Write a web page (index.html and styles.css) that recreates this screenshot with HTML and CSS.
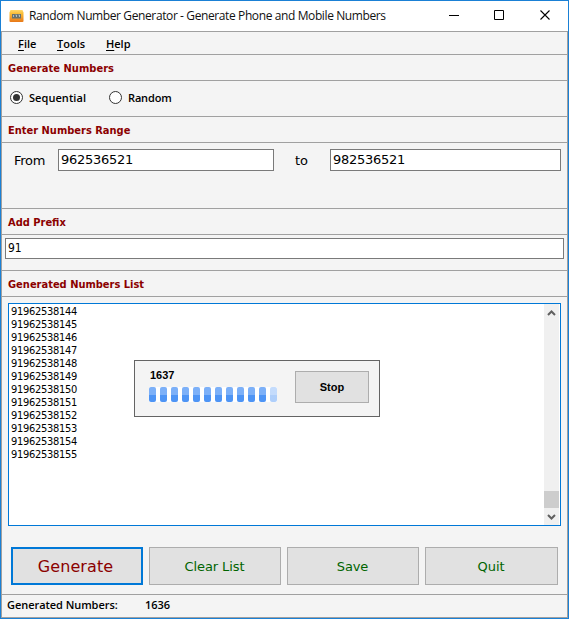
FILE: index.html
```html
<!DOCTYPE html>
<html lang="en">
<head>
<meta charset="utf-8">
<title>Random Number Generator</title>
<link rel="stylesheet" href="styles.css">
</head>
<body>
<div class="window">
  <header class="titlebar">
    <svg class="app-icon" width="15" height="14" viewBox="0 0 15 14">
      <defs><linearGradient id="gold" x1="0" y1="0" x2="0" y2="1"><stop offset="0" stop-color="#ffd86a"/><stop offset=".3" stop-color="#f8bd38"/><stop offset="1" stop-color="#e87818"/></linearGradient></defs>
      <path d="M1.500 1h12l1 2.500v8.500q0 1-1 1h-12q-1 0-1-1V3.500z" fill="url(#gold)"/>
      <rect x="3" y="5" width="9" height="4.500" fill="#66726f"/>
      <path d="M4.500 6v2M6.500 6h1v2M9.500 6h1v2" fill="none" stroke="#d5dcd5" stroke-width=".7"/>
    </svg>
    <span class="title">Random Number Generator - Generate Phone and Mobile Numbers</span>
    <svg class="controls" width="102" height="12" viewBox="0 0 102 12" fill="none" stroke="#000">
      <path d="M0 6.500h10M45.500 1.500h9v9h-9z"/><path d="M91.500 1.500l9 9M100.500 1.500l-9 9" stroke-width="1.100"/>
    </svg>
  </header>
  <nav class="menu"><span class="m-file"><u>F</u>ile</span><span class="m-tools"><u>T</u>ools</span><span class="m-help"><u>H</u>elp</span></nav>
  <h2 class="heading h-gen"><span>Generate Numbers</span></h2>
  <div class="modes">
    <svg width="13" height="13" viewBox="0 0 13 13"><circle cx="6.500" cy="6.500" r="6" fill="#fff" stroke="#333"/><circle cx="6.500" cy="6.500" r="3.500" fill="#333"/></svg>
    <span class="seq">Sequential</span>
    <svg width="13" height="13" viewBox="0 0 13 13"><circle cx="6.500" cy="6.500" r="6" fill="#fff" stroke="#333"/></svg>
    <span class="rand">Random</span>
  </div>
  <h2 class="heading h-range"><span>Enter Numbers Range</span></h2>
  <div class="range">
    <span class="from">From</span><div class="field f-from"><span>962536521</span></div>
    <span class="to">to</span><div class="field f-to"><span>982536521</span></div>
  </div>
  <h2 class="heading h-prefix"><span>Add Prefix</span></h2>
  <div class="prefix"><div class="field f-prefix"><span>91</span></div></div>
  <h2 class="heading h-list"><span>Generated Numbers List</span></h2>
  <main class="results">
    <div class="listbox">
      <div class="rows">
        <div>91962538144</div><div>91962538145</div><div>91962538146</div><div>91962538147</div>
        <div>91962538148</div><div>91962538149</div><div>91962538150</div><div>91962538151</div>
        <div>91962538152</div><div>91962538153</div><div>91962538154</div><div>91962538155</div>
      </div>
      <div class="scrollbar">
        <svg width="15" height="17" viewBox="0 0 15 17"><path d="M4 11l3.500-3.500L11 11" fill="none" stroke="#606060" stroke-width="2"/></svg>
        <div class="thumb"></div>
        <svg width="15" height="17" viewBox="0 0 15 17"><path d="M4 7l3.500 3.500L11 7" fill="none" stroke="#606060" stroke-width="2"/></svg>
      </div>
      <div class="dialog">
        <div class="progress">
          <span class="count">1637</span>
          <div class="bar"><i></i><i></i><i></i><i></i><i></i><i></i><i></i><i></i><i></i><i></i><i></i><i class="fading"></i></div>
        </div>
        <div class="stop"><span>Stop</span></div>
      </div>
    </div>
    <div class="buttons">
      <div class="btn primary"><span>Generate</span></div>
      <div class="btn clear"><span>Clear List</span></div>
      <div class="btn save"><span>Save</span></div>
      <div class="btn quit"><span>Quit</span></div>
    </div>
  </main>
  <footer class="status"><span class="label">Generated Numbers:</span><span class="value">1636</span></footer>
</div>
</body>
</html>
```
FILE: styles.css
```css
* { box-sizing: border-box; }
body { margin: 0; background: #fff; }
svg { display: block; flex: none; }
.window {
  width: 569px; height: 619px; border: 1px solid #1a80d5; background: #f4f4f4;
  display: flex; flex-direction: column; color: #000; white-space: nowrap;
  font: 11px/13px "DejaVu Sans Condensed", "DejaVu Sans", sans-serif;
}
.titlebar { height: 30px; flex: none; background: #fff; display: flex; align-items: center; padding: 0 17px 0 8px; }
.title { font: 12px/16px "Open Sans", sans-serif; letter-spacing: -.39px; margin-left: 5px; color: #111; }
.controls { margin: 0 0 2px auto; }
.menu, .heading, .modes, .range, .prefix, .results, .status { flex: none; border: 1px solid #a0a0a0; border-width: 1px 1px 0; }
.menu { height: 23px; display: flex; align-items: center; padding: 1px 0 0 16px; font: 600 11px/14px "Open Sans", sans-serif; }
.menu u { text-underline-offset: 2px; }
.m-file { width: 39px; }
.m-tools { width: 49px; }
.heading { margin: 0; height: 26px; display: flex; align-items: center; padding: 3px 0 0 6px; font: bold 11px/14px "DejaVu Sans Condensed", sans-serif; color: #8b0000; }
.h-gen { letter-spacing: .05px; }
.modes { height: 36px; display: flex; align-items: center; padding: 0 0 2px 8px; font: 600 11px/14px "Open Sans", sans-serif; }
.seq { width: 80px; margin-left: 6px; letter-spacing: .06px; }
.rand { margin-left: 6px; letter-spacing: -.15px; }
.range { height: 66px; display: flex; padding: 6px 6px 0 12px; font: 13px/22px "DejaVu Sans", sans-serif; }
.from { width: 44px; padding-top: 1px; letter-spacing: -.25px; }
.to { width: 35px; margin-left: 21px; padding-top: 1px; }
.field { background: #fff; border: 1px solid #7a7a7a; padding-left: 2px; }
.f-from, .f-to { height: 22px; line-height: 19px; letter-spacing: -.27px; }
.f-from { width: 216px; }
.f-to { width: 231px; }
.prefix { height: 36px; padding: 3px 3px 0; }
.f-prefix { height: 21px; width: 559px; font-size: 12px; line-height: 19px; }
.results { height: 298px; padding: 6px 6px 0; }
.listbox { position: relative; height: 223px; width: 553px; border: 1px solid #0078d7; background: #fff; display: flex; justify-content: space-between; padding-right: 1px; }
.rows { padding: 1px 0 0 2px; letter-spacing: -.3px; }
.scrollbar { width: 15px; background: #f0f0f0; display: flex; flex-direction: column; }
.thumb { height: 17px; margin-top: auto; background: #cdcdcd; }
.dialog { position: absolute; left: 125px; top: 56px; width: 246px; height: 57px; border: 1px solid #646464; background: #f4f4f4; display: flex; justify-content: space-between; padding: 0 10px 0 14px; font: bold 11px/14px "Liberation Sans", sans-serif; }
.progress { padding-top: 7px; }
.count { display: block; height: 19px; padding-left: 1px; }
.bar { display: flex; gap: 4px; background: #fff; }
.bar i { width: 7px; height: 15px; border-radius: 2px; background: linear-gradient(#7cb0f8 8px, #4d94f5 8px); }
.bar .fading { opacity: .45; }
.stop { width: 74px; height: 32px; margin-top: 10px; border: 1px solid #adadad; background: #e1e1e1; display: flex; align-items: center; justify-content: center; }
.buttons { display: grid; grid-template-columns: 132px 132px 132px 133px; gap: 6px; padding: 21px 0 0 3px; }
.btn { height: 38px; border: 1px solid #adadad; background: #e1e1e1; color: #006400; display: flex; align-items: center; justify-content: center; padding: 2px 1px 0 0; font: 13px/18px "DejaVu Sans", sans-serif; letter-spacing: -.1px; }
.primary { border: 2px solid #0078d7; color: #8b0000; font-size: 16px; padding-right: 3px; letter-spacing: .1px; }
.status { height: 24px; border-bottom-width: 1px; display: flex; align-items: center; padding: 0 0 2px 5px; font: 600 11px/14px "Open Sans", sans-serif; }
.label { width: 138px; letter-spacing: -.05px; }
```
